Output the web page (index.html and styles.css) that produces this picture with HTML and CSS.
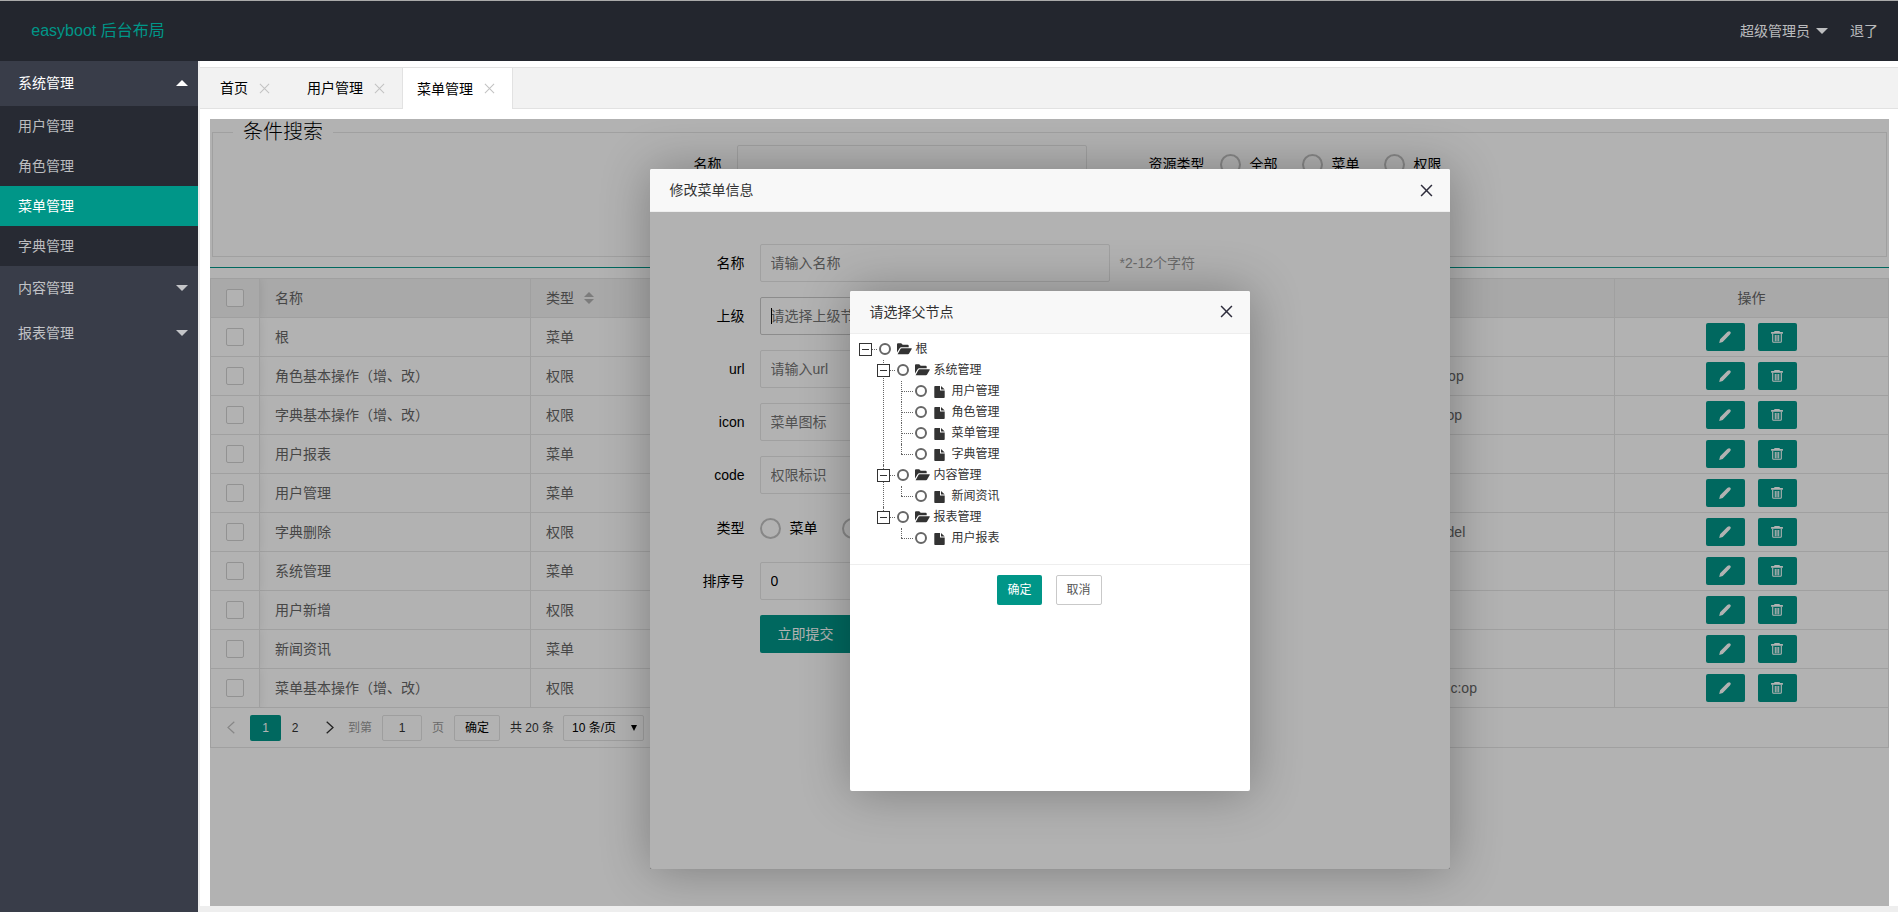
FILE: index.html
```html
<!DOCTYPE html>
<html lang="zh-CN">
<head>
<meta charset="utf-8">
<title>easyboot 后台布局</title>
<link rel="stylesheet" href="styles.css">
</head>
<body>
<svg class="sprite" aria-hidden="true">
  <symbol id="i-close" viewBox="0 0 12 12"><path d="M1 1l10 10M11 1L1 11" fill="none" stroke="currentColor" stroke-width="1.4"/></symbol>
  <symbol id="i-close-thin" viewBox="0 0 12 12"><path d="M1 1l10 10M11 1L1 11" fill="none" stroke="currentColor" stroke-width="1.1"/></symbol>
  <symbol id="i-edit" viewBox="0 0 12 12"><path d="M.2 11.9l.9-3.600L8.300 1Q10.200-.4 11.300.7T10.900 3.600L3.700 10.900z" fill="currentColor"/></symbol>
  <symbol id="i-trash" viewBox="0 0 12 12"><path d="M.1 2.800V1.100h3.200V.1h5.400v1h3.200v1.700z" fill="currentColor"/><path d="M1.700 2.800v7.800q0 .7.8.7h7q.8 0 .8-.7V2.800M4.300 4v6.200M6 4v6.200M7.700 4v6.200" fill="none" stroke="currentColor" stroke-width="1.100"/></symbol>
  <symbol id="i-folder" viewBox="0 0 15 12"><path d="M0 9.6V1.2Q0 .2 1 .2h3.2l1.5 1.6h5q1 0 1 1v1.4H4.2Q3.3 4.200 2.800 5z" fill="currentColor"/><path d="M.6 11.300L3.600 5.800q.3-.6 1-.6h9.700q.8 0 .4.7l-2.600 4.700q-.4.7-1.200.7z" fill="currentColor"/></symbol>
  <symbol id="i-file" viewBox="0 0 11 12"><path d="M.3.8Q.3 0 1.100 0H6v4.600h4.700v6.600q0 .8-.8.8H1.100q-.8 0-.8-.8z" fill="currentColor"/><path d="M7 0l3.700 3.600H7z" fill="currentColor"/></symbol>
  <symbol id="i-prev" viewBox="0 0 8 13"><path d="M7.300.7L1 6.500l6.300 5.800" fill="none" stroke="currentColor" stroke-width="1.200"/></symbol>
  <symbol id="i-next" viewBox="0 0 8 13"><path d="M.7.7L7 6.500.7 12.300" fill="none" stroke="currentColor" stroke-width="1.300"/></symbol>
</svg>

<header class="header">
  <div class="logo">easyboot 后台布局</div>
  <nav class="user-nav">
    <a href="#" class="user-link">超级管理员<span class="caret"></span></a>
    <a href="#" class="user-link">退了</a>
  </nav>
</header>

<div class="shell">
  <nav class="side">
    <a href="#" class="side-group open">系统管理<span class="caret up"></span></a>
    <div class="side-children">
      <a href="#" class="side-item">用户管理</a>
      <a href="#" class="side-item">角色管理</a>
      <a href="#" class="side-item active">菜单管理</a>
      <a href="#" class="side-item">字典管理</a>
    </div>
    <a href="#" class="side-group">内容管理<span class="caret"></span></a>
    <a href="#" class="side-group">报表管理<span class="caret"></span></a>
  </nav>

  <main class="main">
    <div class="tabs">
      <div class="tab spaced"><span>首页</span><button class="tab-close" aria-label="关闭"><svg><use href="#i-close-thin"/></svg></button></div>
      <div class="tab"><span>用户管理</span><button class="tab-close" aria-label="关闭"><svg><use href="#i-close-thin"/></svg></button></div>
      <div class="tab current"><span>菜单管理</span><button class="tab-close" aria-label="关闭"><svg><use href="#i-close-thin"/></svg></button></div>
    </div>

    <section class="page">
      <fieldset class="search">
        <legend>条件搜索</legend>
        <form class="search-form">
          <div class="search-field">
            <label for="q-name">名称</label>
            <input class="input" id="q-name" type="text">
          </div>
          <div class="search-field">
            <span class="search-caption">资源类型</span>
            <div class="radios">
              <label class="radio"><input type="radio" name="q-type">全部</label>
              <label class="radio"><input type="radio" name="q-type">菜单</label>
              <label class="radio"><input type="radio" name="q-type">权限</label>
            </div>
          </div>
        </form>
      </fieldset>
      <hr class="rule">

      <div class="grid">
        <table class="table">
          <colgroup><col class="c-check"><col class="c-name"><col class="c-type"><col><col class="c-code"><col class="c-op"></colgroup>
          <thead>
            <tr>
              <th class="check"><input type="checkbox" aria-label="全选"></th>
              <th>名称</th>
              <th><span class="sortable">类型<span class="sort"><i class="sort-up"></i><i class="sort-down"></i></span></span></th>
              <th></th>
              <th></th>
              <th class="op">操作</th>
            </tr>
          </thead>
          <tbody>
            <tr><td class="check"><input type="checkbox" aria-label="选择"></td><td>根</td><td>菜单</td><td></td><td></td><td class="op"><div class="ops"><button class="act" aria-label="编辑"><svg><use href="#i-edit"/></svg></button><button class="act" aria-label="删除"><svg><use href="#i-trash"/></svg></button></div></td></tr>
            <tr><td class="check"><input type="checkbox" aria-label="选择"></td><td>角色基本操作（增、改）</td><td>权限</td><td></td><td>sys:role:op</td><td class="op"><div class="ops"><button class="act" aria-label="编辑"><svg><use href="#i-edit"/></svg></button><button class="act" aria-label="删除"><svg><use href="#i-trash"/></svg></button></div></td></tr>
            <tr><td class="check"><input type="checkbox" aria-label="选择"></td><td>字典基本操作（增、改）</td><td>权限</td><td></td><td>sys:dict:op</td><td class="op"><div class="ops"><button class="act" aria-label="编辑"><svg><use href="#i-edit"/></svg></button><button class="act" aria-label="删除"><svg><use href="#i-trash"/></svg></button></div></td></tr>
            <tr><td class="check"><input type="checkbox" aria-label="选择"></td><td>用户报表</td><td>菜单</td><td></td><td></td><td class="op"><div class="ops"><button class="act" aria-label="编辑"><svg><use href="#i-edit"/></svg></button><button class="act" aria-label="删除"><svg><use href="#i-trash"/></svg></button></div></td></tr>
            <tr><td class="check"><input type="checkbox" aria-label="选择"></td><td>用户管理</td><td>菜单</td><td></td><td></td><td class="op"><div class="ops"><button class="act" aria-label="编辑"><svg><use href="#i-edit"/></svg></button><button class="act" aria-label="删除"><svg><use href="#i-trash"/></svg></button></div></td></tr>
            <tr><td class="check"><input type="checkbox" aria-label="选择"></td><td>字典删除</td><td>权限</td><td></td><td>sys:dict:del</td><td class="op"><div class="ops"><button class="act" aria-label="编辑"><svg><use href="#i-edit"/></svg></button><button class="act" aria-label="删除"><svg><use href="#i-trash"/></svg></button></div></td></tr>
            <tr><td class="check"><input type="checkbox" aria-label="选择"></td><td>系统管理</td><td>菜单</td><td></td><td></td><td class="op"><div class="ops"><button class="act" aria-label="编辑"><svg><use href="#i-edit"/></svg></button><button class="act" aria-label="删除"><svg><use href="#i-trash"/></svg></button></div></td></tr>
            <tr><td class="check"><input type="checkbox" aria-label="选择"></td><td>用户新增</td><td>权限</td><td></td><td></td><td class="op"><div class="ops"><button class="act" aria-label="编辑"><svg><use href="#i-edit"/></svg></button><button class="act" aria-label="删除"><svg><use href="#i-trash"/></svg></button></div></td></tr>
            <tr><td class="check"><input type="checkbox" aria-label="选择"></td><td>新闻资讯</td><td>菜单</td><td></td><td></td><td class="op"><div class="ops"><button class="act" aria-label="编辑"><svg><use href="#i-edit"/></svg></button><button class="act" aria-label="删除"><svg><use href="#i-trash"/></svg></button></div></td></tr>
            <tr><td class="check"><input type="checkbox" aria-label="选择"></td><td>菜单基本操作（增、改）</td><td>权限</td><td></td><td>sys:public:op</td><td class="op"><div class="ops"><button class="act" aria-label="编辑"><svg><use href="#i-edit"/></svg></button><button class="act" aria-label="删除"><svg><use href="#i-trash"/></svg></button></div></td></tr>
          </tbody>
        </table>
        <div class="pager">
          <button class="pg pg-prev" aria-label="上一页"><svg><use href="#i-prev"/></svg></button>
          <button class="pg pg-on">1</button>
          <button class="pg pg-num">2</button>
          <button class="pg pg-next" aria-label="下一页"><svg><use href="#i-next"/></svg></button>
          <label class="pg-jump"><span>到第</span><input type="text" value="1"><span>页</span></label>
          <button class="pg-ok">确定</button>
          <span class="pg-total">共 20 条</span>
          <span class="pg-size"><select aria-label="每页条数"><option>10 条/页</option></select><span class="pg-arrow"></span></span>
        </div>
      </div>

      <div class="shade shade-page">
        <div class="dialog dialog-edit" role="dialog" aria-label="修改菜单信息">
          <div class="dialog-title"><span>修改菜单信息</span><button class="dialog-close" aria-label="关闭"><svg><use href="#i-close"/></svg></button></div>
          <div class="dialog-body">
            <form class="form">
              <div class="row"><label class="row-label" for="f-name">名称</label><input class="input" id="f-name" type="text" placeholder="请输入名称"><span class="hint">*2-12个字符</span></div>
              <div class="row"><label class="row-label" for="f-parent">上级</label><div class="focus-wrap"><input class="input focused" id="f-parent" type="text" placeholder="请选择上级节点"><span class="text-caret"></span></div></div>
              <div class="row"><label class="row-label" for="f-url">url</label><input class="input" id="f-url" type="text" placeholder="请输入url"></div>
              <div class="row"><label class="row-label" for="f-icon">icon</label><input class="input" id="f-icon" type="text" placeholder="菜单图标"></div>
              <div class="row"><label class="row-label" for="f-code">code</label><input class="input" id="f-code" type="text" placeholder="权限标识"></div>
              <div class="row"><span class="row-label">类型</span><div class="radios"><label class="radio"><input type="radio" name="f-type">菜单</label><label class="radio"><input type="radio" name="f-type">权限</label></div></div>
              <div class="row"><label class="row-label" for="f-sort">排序号</label><input class="input" id="f-sort" type="text" value="0"></div>
              <div class="row row-submit"><button class="submit" type="button">立即提交</button></div>
            </form>

            <div class="shade shade-dialog">
              <div class="dialog dialog-tree" role="dialog" aria-label="请选择父节点">
                <div class="dialog-title"><span>请选择父节点</span><button class="dialog-close" aria-label="关闭"><svg><use href="#i-close"/></svg></button></div>
                <ul class="tree">
                  <li class="branch root">
                    <label class="node"><span class="toggle"></span><input type="radio" name="parent"><svg class="folder"><use href="#i-folder"/></svg>根</label>
                    <ul>
                      <li class="branch">
                        <label class="node"><span class="toggle"></span><input type="radio" name="parent"><svg class="folder"><use href="#i-folder"/></svg>系统管理</label>
                        <ul>
                          <li><label class="node"><input type="radio" name="parent"><svg class="file"><use href="#i-file"/></svg>用户管理</label></li>
                          <li><label class="node"><input type="radio" name="parent"><svg class="file"><use href="#i-file"/></svg>角色管理</label></li>
                          <li><label class="node"><input type="radio" name="parent"><svg class="file"><use href="#i-file"/></svg>菜单管理</label></li>
                          <li><label class="node"><input type="radio" name="parent"><svg class="file"><use href="#i-file"/></svg>字典管理</label></li>
                        </ul>
                      </li>
                      <li class="branch">
                        <label class="node"><span class="toggle"></span><input type="radio" name="parent"><svg class="folder"><use href="#i-folder"/></svg>内容管理</label>
                        <ul>
                          <li><label class="node"><input type="radio" name="parent"><svg class="file"><use href="#i-file"/></svg>新闻资讯</label></li>
                        </ul>
                      </li>
                      <li class="branch">
                        <label class="node"><span class="toggle"></span><input type="radio" name="parent"><svg class="folder"><use href="#i-folder"/></svg>报表管理</label>
                        <ul>
                          <li><label class="node"><input type="radio" name="parent"><svg class="file"><use href="#i-file"/></svg>用户报表</label></li>
                        </ul>
                      </li>
                    </ul>
                  </li>
                </ul>
                <div class="tree-actions"><button class="btn-sm primary">确定</button><button class="btn-sm">取消</button></div>
              </div>
            </div>
          </div>
        </div>
      </div>
    </section>
  </main>
</div>
</body>
</html>
```
FILE: styles.css
```css
* { box-sizing: border-box; }
body {
  margin: 0;
  min-height: 100vh;
  display: flex;
  flex-direction: column;
  font: 14px/24px "Liberation Sans", "Noto Sans CJK SC", sans-serif;
  color: #000;
  background: #eee;
}
a { color: inherit; text-decoration: none; }
button, input, select { font: inherit; color: inherit; margin: 0; padding: 0; }
button { border: 0; background: none; cursor: pointer; }
ul { list-style: none; margin: 0; padding: 0; }
svg { display: block; }
.sprite { position: absolute; width: 0; height: 0; }

.header {
  display: flex;
  justify-content: space-between;
  align-items: center;
  height: 61px;
  border-top: 1px solid #aaa;
  background: #23262e;
  padding-right: 20px;
}
.logo { width: 196px; text-align: center; font-size: 16px; color: #009688; }
.user-nav { display: flex; gap: 22px; }
.user-link { display: flex; align-items: center; gap: 6px; color: rgba(255, 255, 255, .7); }
.caret {
  border: 6px solid transparent;
  border-top-color: rgba(255, 255, 255, .7);
  border-bottom: 0;
}
.caret.up { border-top: 0; border-bottom: 6px solid #fff; }

.shell { flex: 1; display: flex; }
.side { width: 198px; flex: none; background: #393d49; color: rgba(255, 255, 255, .7); }
.side-group, .side-item { display: flex; align-items: center; height: 45px; padding: 0 10px 0 18px; }
.side-group { justify-content: space-between; line-height: 22px; padding-bottom: 1px; }
.side-group.open { color: #fff; }
.side-children { background: rgba(0, 0, 0, .3); }
.side-item { height: 40px; }
.side-item.active { background: #009688; color: #fff; }

.main {
  flex: 1;
  min-width: 0;
  display: flex;
  flex-direction: column;
  margin-bottom: 6px;
  padding-top: 6px;
  border-left: 2px solid #eee;
  background: #fff;
}
.tabs {
  display: flex;
  height: 42px;
  padding-left: 5px;
  border: solid #e2e2e2;
  border-width: 1px 0;
  background: #f2f2f2;
}
.tab { display: flex; align-items: center; gap: 11px; padding: 0 17px 0 15px; height: 40px; }
.tab.spaced { margin-right: 5px; }
.tab.current {
  height: 41px;
  padding-left: 14px;
  border: solid #e2e2e2;
  border-width: 0 1px;
  background: #fff;
}
.tab-close { color: #c2c2c2; }
.tab-close svg { width: 11px; height: 11px; }

.page {
  position: relative;
  flex: 1;
  margin: 10px 9px 0 10px;
  background: #fff;
}

.search { margin: 0 2px; padding: 0; border: 1px solid #e6e6e6; }
.search legend { margin-left: 20px; padding: 0 10px; font-size: 20px; line-height: 26px; font-weight: 300; }
.search-form { display: flex; justify-content: center; gap: 62px; height: 111px; margin-left: 36px; }
.search-field { display: flex; align-items: flex-start; gap: 15px; line-height: 38px; }

.input {
  width: 350px;
  height: 38px;
  padding: 0 10px;
  border: 1px solid #e6e6e6;
  border-radius: 2px;
  background: #fff;
  outline: 0;
}
.input::placeholder { color: #757575; opacity: 1; }
.input.focused { border-color: #c9c9c9; }
.radios { display: flex; gap: 24px; }
.radio { display: flex; align-items: center; gap: 9px; height: 38px; }
.radio input {
  appearance: none;
  width: 21px;
  height: 21px;
  border: 2px solid #c2c2c2;
  border-radius: 50%;
}

.rule { height: 1px; margin: 10px 0; border: 0; background: #009688; }

.grid { border: 1px solid #e6e6e6; color: #666; }
.table { width: 100%; table-layout: fixed; border-collapse: separate; border-spacing: 0; }
.c-check { width: 49px; }
.c-name { width: 271px; }
.c-type { width: 150px; }
.c-code { width: 234px; }
.c-op { width: 273px; }
.table th, .table td {
  height: 39px;
  padding: 0 15px;
  border: solid #e6e6e6;
  border-width: 0 1px 1px 0;
  text-align: left;
  font-weight: 400;
  line-height: 28px;
  white-space: nowrap;
}
.table th:last-child, .table td:last-child { border-right: 0; }
.table th { background: #f2f2f2; }
.table .op { text-align: center; }
.table .check { box-shadow: 1px 0 8px rgba(0, 0, 0, .08); clip-path: inset(0 -8px 0 0); }
.table .check input {
  appearance: none;
  display: block;
  width: 18px;
  height: 18px;
  border: 1px solid #d2d2d2;
  border-radius: 2px;
  background: #fff;
}
.sortable { display: flex; align-items: center; gap: 10px; }
.sort { display: flex; flex-direction: column; gap: 2px; }
.sort-up, .sort-down { border: 5px solid transparent; }
.sort-up { border-top: 0; border-bottom-color: #b2b2b2; }
.sort-down { border-bottom: 0; border-top-color: #b2b2b2; }
.ops { display: flex; justify-content: center; gap: 13px; }
.act {
  display: flex;
  align-items: center;
  justify-content: center;
  width: 39px;
  height: 28px;
  padding-right: 2px;
  border-radius: 2px;
  background: #009688;
  color: #fff;
}
.act svg { width: 12px; height: 12px; }

.pager { display: flex; align-items: center; height: 39px; padding-left: 8px; font-size: 12px; color: #333; }
.pg { display: flex; align-items: center; justify-content: center; width: 31px; height: 26px; }
.pg svg { width: 8px; height: 13px; }
.pg-prev { padding-right: 7px; color: #c2c2c2; }
.pg-on { background: #009688; color: #fff; border-radius: 2px; }
.pg-num { width: 28px; }
.pg-next { margin-left: 5px; }
.pg-jump { display: flex; align-items: center; gap: 10px; margin-left: 3px; color: #999; }
.pg-jump input { width: 40px; height: 26px; border: 1px solid #e2e2e2; border-radius: 2px; text-align: center; color: #333; background: #fff; }
.pg-ok { width: 46px; height: 26px; margin: 0 10px; border: 1px solid #e2e2e2; border-radius: 2px; color: #000; }
.pg-size { position: relative; margin-left: 9px; color: #000; }
.pg-size select { display: block; appearance: none; width: 81px; height: 26px; padding-left: 8px; border: 1px solid #e2e2e2; border-radius: 2px; background: #fff; }
.pg-arrow { position: absolute; right: 7px; top: 10px; border: 3px solid transparent; border-top: 6px solid #000; border-bottom: 0; }

.shade { position: absolute; inset: 0; display: flex; justify-content: center; background: rgba(0, 0, 0, .3); }
.shade-page { align-items: flex-start; padding-top: 50px; overflow: hidden; }
.shade-dialog { align-items: center; }
.dialog { display: flex; flex-direction: column; border-radius: 2px; background: #fff; box-shadow: 1px 1px 50px rgba(0, 0, 0, .3); }
.dialog-edit { width: 800px; height: 700px; }
.dialog-tree { width: 400px; height: 500px; }
.dialog-title {
  display: flex;
  align-items: center;
  justify-content: space-between;
  height: 43px;
  padding: 0 17px 0 20px;
  border-bottom: 1px solid #eee;
  border-radius: 2px 2px 0 0;
  background: #f8f8f8;
  color: #333;
}
.dialog-close { color: #2e2d3c; }
.dialog-close svg { width: 13px; height: 13px; }
.dialog-body { position: relative; flex: 1; }

.form { display: flex; flex-direction: column; gap: 15px; padding: 32px 0 0; }
.row { display: flex; align-items: center; height: 38px; }
.row-label { width: 95px; margin-right: 15px; text-align: right; }
.hint { margin-left: 10px; color: #999; }
.focus-wrap { position: relative; }
.text-caret { position: absolute; left: 11px; top: 11px; width: 1px; height: 16px; background: #000; }
.row-submit { padding-left: 110px; }
.submit { height: 38px; padding: 0 18px; border-radius: 2px; background: #009688; color: #fff; }

.tree { padding: 5px 9px 15px; font-size: 12px; line-height: 21px; color: #333; border-bottom: 1px solid #eee; }
.tree ul { padding-left: 18px; }
.tree li { position: relative; }
.tree li::before {
  content: "";
  position: absolute;
  left: 6px;
  top: 0;
  bottom: 0;
  border-left: 1px dotted #666;
}
.tree li:last-child::before { bottom: auto; height: 10px; }
.tree .root::before { display: none; }
.tree li::after {
  content: "";
  position: absolute;
  left: 6px;
  top: 10px;
  width: 12px;
  border-top: 1px dotted #666;
}
.node { display: flex; align-items: center; height: 21px; padding-left: 20px; }
.node input { appearance: none; width: 12px; height: 12px; margin-right: 6px; border: 2px solid #666; border-radius: 50%; }
.node svg { width: 15px; height: 12px; margin-right: 4px; }
.node .file { width: 11px; margin: 2px 7px 0 1px; }
.toggle {
  position: absolute;
  z-index: 1;
  left: 0;
  top: 4px;
  width: 13px;
  height: 13px;
  border: 1px solid #333;
  background: linear-gradient(#333, #333) center / 7px 1px no-repeat #fff;
}
.tree-actions { display: flex; justify-content: center; gap: 14px; padding-top: 10px; font-size: 12px; }
.btn-sm { height: 30px; padding: 0 10px; border: 1px solid #c9c9c9; border-radius: 2px; color: #555; background: #fff; }
.btn-sm.primary { border: 0; background: #009688; color: #fff; }
```
